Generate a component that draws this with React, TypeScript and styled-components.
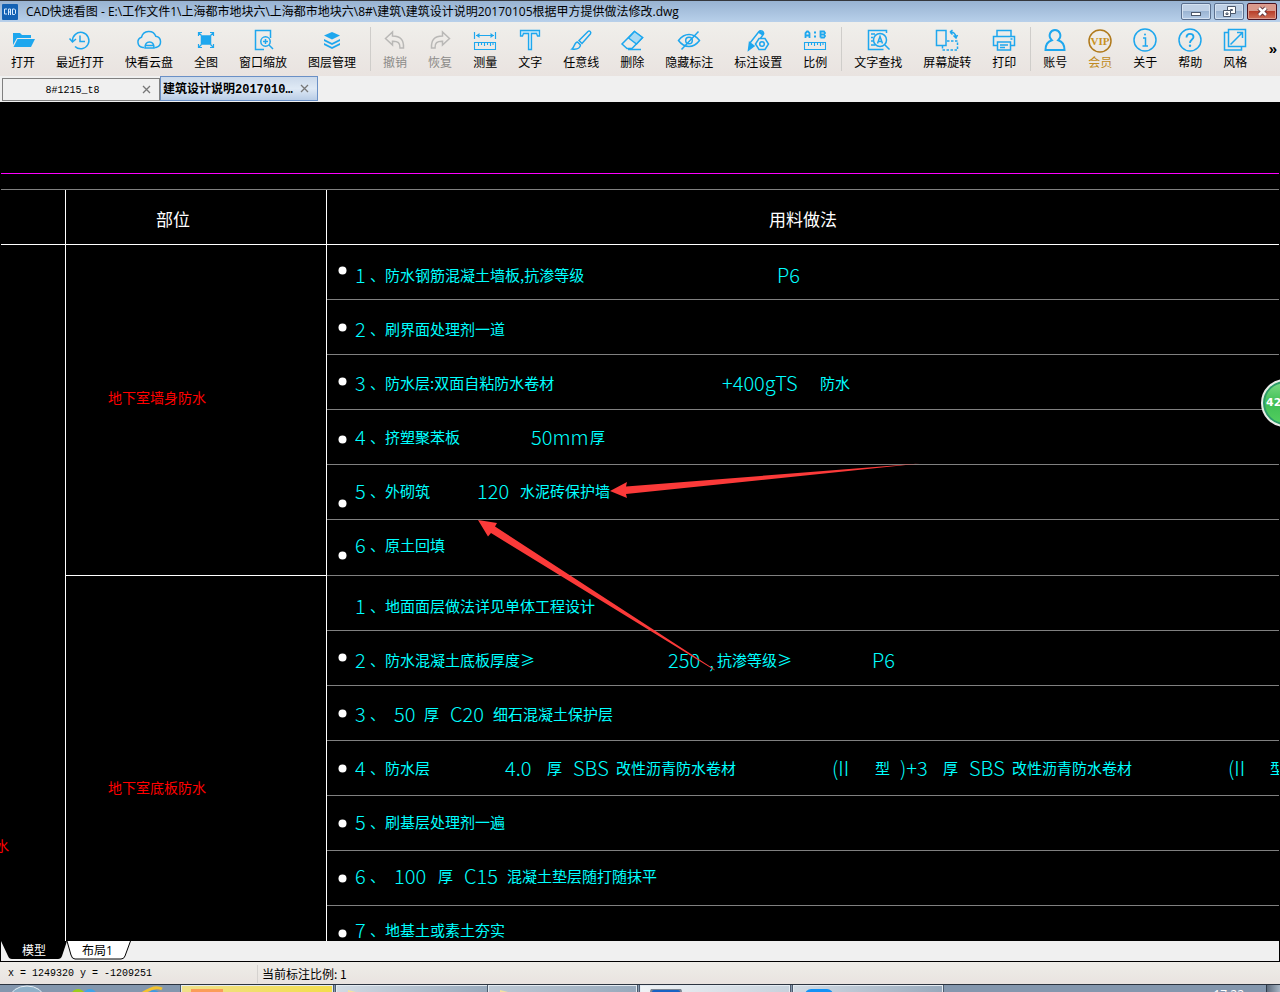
import React from "react";
import styled, { createGlobalStyle } from "styled-components";

const han = '"Noto Sans CJK SC", sans-serif';
const uiFont = `"Open Sans", ${han}`;
const monoFont = '"Liberation Mono", "Noto Sans CJK SC", monospace';

const GlobalStyle = createGlobalStyle`
  *, *::before, *::after { box-sizing: border-box; }
  body { margin: 0; background: #000; }
  button { font: inherit; color: inherit; padding: 0; border: 0; background: none; }
`;

const Shell = styled.div`
  display: flex;
  flex-direction: column;
  height: 100vh;
  overflow: hidden;
  font-family: ${han};
  font-size: 12px;
  color: #000;
`;

/* ---------- title bar ---------- */

const TitleBar = styled.header`
  flex: none;
  display: flex;
  align-items: center;
  gap: 8px;
  height: 22px;
  padding: 0 3px 0 2px;
  border-top: 1px solid #35373c;
  background: linear-gradient(#98b3d2, #b8d0ea);
`;

const Title = styled.h1`
  flex: 1;
  margin: 0;
  font: 400 12px/20px ${uiFont};
  white-space: nowrap;
  overflow: hidden;
`;

const WindowButtons = styled.div`
  display: flex;
  gap: 3px;
`;

const WindowButton = styled.button<{ $close?: boolean }>`
  display: grid;
  place-items: center;
  width: 30px;
  height: 17px;
  border: 1px solid ${(p) => (p.$close ? "#4a1420" : "#5a6f8e")};
  border-radius: 2px;
  box-shadow: inset 0 0 0 1px ${(p) => (p.$close ? "#dd9d90" : "#d5e2f1")};
  background: ${(p) =>
    p.$close
      ? "linear-gradient(#d99a8c 0 45%, #b8402b 50%, #cf7158)"
      : "linear-gradient(#bfd0e5 0 45%, #9bb4d2 50%, #b4cbe6)"};
`;

/* ---------- toolbar ---------- */

const Toolbar = styled.nav`
  flex: none;
  display: flex;
  align-items: flex-start;
  height: 54px;
  padding: 5px 3px 0 11px;
  background: linear-gradient(#f0efeb, #e9e3e0);
`;

const ToolGroup = styled.div`
  display: flex;
  gap: 21px;
`;

const Separator = styled.span`
  flex: none;
  width: 1px;
  height: 44px;
  margin: 0 12px 0 14px;
  background: #cfcdca;
`;

const ToolButton = styled.button<{ $tone?: string }>`
  display: flex;
  flex-direction: column;
  align-items: center;
  color: ${(p) => p.$tone ?? "#000"};
  font-size: 12px;
  line-height: 18px;
  white-space: nowrap;
`;

const ToolIcon = styled.svg`
  display: block;
  width: 26px;
  height: 26px;
  margin: 0 -1px;
  fill: none;
  stroke: #1ea7ee;
  stroke-width: 1.5;
`;

const More = styled.button`
  margin: 12px 0 0 auto;
  font: 700 15px/20px "Liberation Sans", sans-serif;
`;

/* ---------- document tabs ---------- */

const TabBar = styled.div`
  flex: none;
  display: flex;
  align-items: flex-end;
  height: 26px;
  padding: 0 2px 1px;
  background: #f0f0f0;
`;

const FileTab = styled.div<{ $active?: boolean }>`
  display: flex;
  align-items: center;
  width: 158px;
  height: ${(p) => (p.$active ? 25 : 23)}px;
  padding: 0 8px 0 ${(p) => (p.$active ? 2 : 0)}px;
  border: 1px solid ${(p) => (p.$active ? "#6a90c6" : "#808080")};
  background: ${(p) => (p.$active ? "linear-gradient(#cbd9ea, #dfe9f5 50%, #b9cde6)" : "#f0f0f0")};
`;

const TabName = styled.button<{ $active?: boolean }>`
  flex: 1;
  padding-top: 2px;
  text-align: ${(p) => (p.$active ? "left" : "center")};
  font: ${(p) => (p.$active ? "700 12px/20px" : "400 10px/20px")} ${monoFont};
  white-space: nowrap;
`;

const CloseTab = styled.button`
  display: grid;
  place-items: center;
  width: 9px;
  height: 9px;
`;

/* ---------- drawing ---------- */

const Canvas = styled.main`
  position: relative;
  flex: 1;
  min-height: 0;
  overflow: hidden;
  padding: 71px 1px 0;
  background: #000;
`;

const Frame = styled.div`
  border-top: 1px solid #f0f;
  padding-top: 15px;
`;

const Schedule = styled.table`
  width: 100%;
  table-layout: fixed;
  border-collapse: separate;
  border-spacing: 0;
  border-top: 1px solid #808080;
`;

const HeadCell = styled.th<{ $width?: number; $indent?: number }>`
  width: ${(p) => (p.$width ? `${p.$width}px` : "auto")};
  height: 55px;
  padding: 4px 0 0 ${(p) => p.$indent ?? 0}px;
  border-bottom: 1px solid #fff;
  border-right: ${(p) => (p.$width ? "1px solid #fff" : "0")};
  color: #fff;
  font: 400 17px/24px ${han};
  text-align: ${(p) => (p.$indent ? "left" : "center")};
`;

const PartCell = styled.th<{ $last?: boolean }>`
  padding: 0 0 26px 42px;
  height: ${(p) => (p.$last ? 448 : 331)}px;
  border-right: 1px solid #fff;
  border-bottom: 1px solid #fff;
  color: #f00;
  font: 400 14px/24px ${han};
  text-align: left;
`;

const EdgeCell = styled.td`
  padding: 588px 0 0;
  border-right: 1px solid #fff;
  vertical-align: top;
  color: #f00;
  font: 400 14px/24px ${han};
  text-indent: -6px;
`;

const MethodCell = styled.td<{ $rules: number }>`
  padding: 3px 0 0 28px;
  border-bottom: 1px solid #808080;
  vertical-align: top;
  background: repeating-linear-gradient(#000 0 54px, #808080 54px 55px) no-repeat;
  background-size: 100% ${(p) => p.$rules * 55}px;
`;

const Steps = styled.ol`
  margin: 0;
  padding: 0;
  list-style: none;
`;

const Step = styled.li`
  display: flex;
  align-items: center;
  height: 54px;
  overflow: hidden;
  color: #0ff;
  white-space: nowrap;
`;

const Slot = styled.span<{ $w: number; $latin: boolean }>`
  flex: none;
  width: ${(p) => p.$w}px;
  font: ${(p) => (p.$latin ? "300 20px/32px" : "400 15px/32px")} ${han};
`;

const Markup = styled.svg`
  position: absolute;
  top: 0;
  left: 0;
  width: 1280px;
  height: 840px;
  pointer-events: none;
`;

const Badge = styled.div`
  position: absolute;
  top: 277px;
  right: -29px;
  width: 48px;
  height: 48px;
  padding-left: 3px;
  border: 2px solid #e8ece8;
  border-radius: 50%;
  box-shadow: inset 0 0 0 2px #2c9a6a;
  background: linear-gradient(#7fdc86, #3fbf55 50%, #55d060);
  color: #fff;
  font: 700 11px/44px "DejaVu Sans", sans-serif;
`;

/* ---------- bottom bars ---------- */

const SheetBar = styled.div`
  flex: none;
  display: flex;
  height: 21px;
  border: solid #000;
  border-width: 0 1px 1px;
  background: #f0f0f0;
`;

const SheetTab = styled.button<{ $active?: boolean }>`
  position: relative;
  width: ${(p) => (p.$active ? 66 : 61)}px;
  height: 19px;
  color: ${(p) => (p.$active ? "#fff" : "#000")};
  font: 400 12px/19px ${uiFont};

  svg {
    position: absolute;
    top: 0;
    left: 0;
  }
  span {
    position: relative;
  }
`;

const StatusBar = styled.footer`
  flex: none;
  display: flex;
  align-items: center;
  height: 22px;
  padding: 1px 8px 0;
  background: linear-gradient(#eeede8, #e9e3e0);
  font: 400 10px/20px ${monoFont};
`;

const Coordinates = styled.span`
  width: 250px;
  height: 18px;
  line-height: 18px;
  border-right: 1px solid #d5d2cf;
`;

const Scale = styled.span`
  padding-left: 4px;
  font: 400 12px/20px ${han};
`;

const Taskbar = styled.div`
  flex: none;
  display: flex;
  align-items: flex-start;
  height: 8px;
  overflow: hidden;
  border-top: 1px solid #2c3440;
  background: #8497ae;
`;

const Launchers = styled.div`
  flex: none;
  display: flex;
  width: 181px;
`;

const TaskButton = styled.button<{ $tone: string; $w: number; $gap?: number }>`
  flex: none;
  display: flex;
  width: ${(p) => p.$w}px;
  height: 24px;
  margin-right: ${(p) => p.$gap ?? 3}px;
  padding: 3px 9px;
  border: 1px solid #e4ebf2;
  box-shadow: 0 0 0 1px #4d5b6d;
  background: ${(p) => p.$tone};
`;

const Clock = styled.time`
  margin-left: auto;
  padding: 2px 22px 0 0;
  color: #fff;
  font: 400 12px/16px ${uiFont};
`;

const ShowDesktop = styled.button`
  width: 14px;
  height: 24px;
  border-left: 1px solid #2f3b4a;
  background: linear-gradient(90deg, #5d6b7d, #a9b6c5);
`;

/* ---------- icons ---------- */

const ruler = <path d="M2.5 15.5h21v7h-21z M6.5 16v3 M9.5 16v2 M12.5 16v3 M15.5 16v2 M18.5 16v3 M21 16v2" strokeWidth="1.1" />;

const icons: Record<string, React.ReactNode> = {
  open: (
    <g fill="#1ea7ee" stroke="none">
      <path d="M3 6h7l2 2h9v3H7L3 18z" />
      <path d="M7.500 12H25l-4 8H3.500z" />
    </g>
  ),
  recent: (
    <g>
      <path d="M5.500 14A8.200 8.200 0 1 1 8 19.500" />
      <path d="M2.500 11.500l3 3.500 3.500-3" />
      <path d="M13 8.500v6h5" />
    </g>
  ),
  cloud: (
    <g>
      <path d="M8 20.500H7A5.300 5.300 0 0 1 5.500 10.200 7.500 7.500 0 0 1 19.800 9.300 5.700 5.700 0 0 1 20 20.500h-1.500" />
      <path d="M9 21c0-3.500 1-6 4.500-6s4.500 2.500 4.500 6z M9.500 18.500h8" />
    </g>
  ),
  full: (
    <g>
      <rect x="8.500" y="9" width="9" height="8" fill="#1ea7ee" />
      <path d="M5.500 9V5.500H9 M17 5.500h3.500V9 M20.500 17v3.500H17 M9 20.500H5.500V17 M5.500 5.500l3 3 M20.500 5.500l-3 3 M20.500 20.500l-3-3 M5.500 20.500l3-3" strokeWidth="1.200" />
    </g>
  ),
  zoomWindow: (
    <g>
      <path d="M20.500 11V3.500h-15v19H14" />
      <circle cx="15.500" cy="14.500" r="4.700" />
      <path d="M19 18l4 4 M13 14.500h5 M15.500 12v5" />
    </g>
  ),
  layers: (
    <g fill="#1ea7ee" stroke="none">
      <path d="M13 5l8 3.500-8 4-8-4z" />
      <path d="M5 12l8 4 8-4v2l-8 4-8-4z" />
      <path d="M5 16l8 4 8-4v2l-8 4-8-4z" />
    </g>
  ),
  undo: <path stroke="#b9b8b6" d="M3.500 11.500L10.500 5v4c8 0 11.500 4 11 12h-3.500c.2-5-2-7-7.500-6.800V18z" />,
  redo: <path stroke="#b9b8b6" d="M22.500 11.500L15.500 5v4c-8 0-11.500 4-11 12H8c-.2-5 2-7 7.500-6.800V18z" />,
  measure: (
    <g>
      <path d="M2.500 5v7 M23.500 5v7 M4 8.500h18" strokeWidth="1.2" />
      <path d="M7.500 6L4 8.500 7.500 11z M18.500 6l3.500 2.500-3.500 2.500z" fill="#1ea7ee" stroke="none" />
      {ruler}
    </g>
  ),
  text: <path d="M3.500 3.500h19V9h-2l-1-2.500h-5v16h-3v-16h-5L5.500 9h-2z" fill="#c9e8f8" strokeWidth="1.300" />,
  brush: (
    <g>
      <path d="M11 13.500L20 4.500c1.500-1.200 3.500.5 2.500 2.200L14 16.500z" />
      <path d="M9.500 15c-3 0-3 5-5.500 7 4 .5 8-.5 8.500-4z" />
    </g>
  ),
  eraser: (
    <g>
      <path d="M15.500 4.500l8 6-10.500 11H8L3 17z" />
      <path d="M15.500 4.500l8 6-6 6.500-8-6z" fill="#a9d9f3" />
      <path d="M9 22.500h13" />
    </g>
  ),
  hide: (
    <g>
      <path d="M2.500 13.500c6-8 15-8 21 0-6 8-15 8-21 0z" />
      <circle cx="13" cy="13.500" r="3.300" />
      <path d="M22.500 4.500l-17 18" />
    </g>
  ),
  annotate: (
    <g>
      <path d="M5 16L14 4.500c2-2 5.500.2 4.300 3L15 12" />
      <path d="M14 4.500l4.500 3" strokeWidth="3" />
      <path d="M4.500 15.500l4.500 3.500-5.500 4z" fill="#1ea7ee" />
      <path d="M14 11.500h6l3.500 5.500-3.500 5.500h-6L10.500 17z" fill="#efecea" />
      <circle cx="17" cy="17" r="2.300" />
    </g>
  ),
  ratio: (
    <g>
      <path d="M3.500 11V6l1.500-1.500h1L7.500 6v5 M3.500 8.500h4 M18.500 10.500v-6h3.500l1 1.500-1 1.500h-3.500 M22 7.500l1 1.500-1 1.500h-3.500" strokeWidth="1.800" />
      <path d="M12 5.500h2 M12 9.500h2" strokeWidth="2" />
      {ruler}
    </g>
  ),
  find: (
    <g>
      <path d="M21.500 6V3.500h-18v19h15" />
      <path d="M6 7h4 M6 10.500h2 M6 14h2 M6 18h4" />
      <circle cx="15" cy="13" r="6.500" />
      <path d="M20 18l4.500 4.500 M12.500 16.500L15 9.500l2.500 7 M13.500 14.500h3.200" />
    </g>
  ),
  rotate: (
    <g>
      <path d="M2.500 3.500h9.500v15H2.500z" />
      <path d="M8.500 19v4h15v-9H13" strokeDasharray="2.500 1.500" />
      <path d="M16.500 5c3 0 5 2 5.500 5 M16 5l2.500-2 M16 5l2.500 2.500 M19.500 8.500l2.500 2.500 1.500-3" />
    </g>
  ),
  print: (
    <g>
      <path d="M6 9V3.500h14V9 M6 18.500H2.500v-9h21v9H20" />
      <path d="M6.500 15h13v8h-13z M9 18h8 M9 20.500h5 M19.500 12h2" />
    </g>
  ),
  account: (
    <path
      strokeWidth="2"
      d="M9.800 13.200c-4.500-4.500-1.200-10.200 3.200-10.200s7.700 5.700 3.200 10.200c3.500 1 6.300 4.500 6.300 9.800h-19c0-5.300 2.800-8.800 6.300-9.800z"
    />
  ),
  vip: (
    <g stroke="#b07a1c">
      <circle cx="13" cy="14" r="11" />
      <text x="13" y="18" textAnchor="middle" fontFamily="Liberation Serif, serif" fontSize="11" fontWeight="700" fill="#c9921e" stroke="none">
        VIP
      </text>
    </g>
  ),
  about: (
    <g>
      <circle cx="13" cy="13" r="11" />
      <path d="M11 11h2.500v8 M10.500 19h5.500" />
      <circle cx="13" cy="7.500" r="1" fill="#1ea7ee" stroke="none" />
    </g>
  ),
  help: (
    <g>
      <circle cx="13" cy="13" r="11" />
      <path d="M9.500 10.500c0-5 7-4.500 7-.5 0 2.500-3.500 2.500-3.500 6" strokeWidth="1.800" />
      <circle cx="13" cy="18.700" r="1.200" fill="#1ea7ee" stroke="none" />
    </g>
  ),
  style: (
    <g>
      <path d="M16 2.500H6.500v17h17V12 M6.500 5.500h-4v17.500h17v-3.500 M15 2.500h8.500v10" />
      <path d="M8.500 17.500l12-12 M15 5.500h5.500V11" />
    </g>
  ),
};

type Tool = { icon: string; label: string; tone?: string };

const toolGroups: Tool[][] = [
  [
    { icon: "open", label: "打开" },
    { icon: "recent", label: "最近打开" },
    { icon: "cloud", label: "快看云盘" },
    { icon: "full", label: "全图" },
    { icon: "zoomWindow", label: "窗口缩放" },
    { icon: "layers", label: "图层管理" },
  ],
  [
    { icon: "undo", label: "撤销", tone: "#8c8b89" },
    { icon: "redo", label: "恢复", tone: "#8c8b89" },
    { icon: "measure", label: "测量" },
    { icon: "text", label: "文字" },
    { icon: "brush", label: "任意线" },
    { icon: "eraser", label: "删除" },
    { icon: "hide", label: "隐藏标注" },
    { icon: "annotate", label: "标注设置" },
    { icon: "ratio", label: "比例" },
  ],
  [
    { icon: "find", label: "文字查找" },
    { icon: "rotate", label: "屏幕旋转" },
    { icon: "print", label: "打印" },
  ],
  [
    { icon: "account", label: "账号" },
    { icon: "vip", label: "会员", tone: "#c08a20" },
    { icon: "about", label: "关于" },
    { icon: "help", label: "帮助" },
    { icon: "style", label: "风格" },
  ],
];

/* Each step is a run of text pieces with the width of the slot that holds it. */
type Piece = [text: string, width: number];

const wallSteps: Piece[][] = [
  [["防水钢筋混凝土墙板,抗渗等级", 392], ["P6", 30]],
  [["刷界面处理剂一道", 120]],
  [["防水层:双面自粘防水卷材", 337], ["+400gTS", 98], ["防水", 30]],
  [["挤塑聚苯板", 146], ["50mm", 59], ["厚", 15]],
  [["外砌筑", 92], ["120", 43], ["水泥砖保护墙", 90]],
  [["原土回填", 60]],
];

const floorSteps: Piece[][] = [
  [["地面面层做法详见单体工程设计", 210]],
  [["防水混凝土底板厚度≥", 283], ["250", 41], [",", 8], ["抗渗等级≥", 155], ["P6", 30]],
  [["", 9], ["50", 30], ["厚", 26], ["C20", 43], ["细石混凝土保护层", 120]],
  [
    ["防水层", 120], ["4.0", 42], ["厚", 26], ["SBS", 43], ["改性沥青防水卷材", 216], ["(II", 43], ["型", 25],
    [")+3", 43], ["厚", 26], ["SBS", 43], ["改性沥青防水卷材", 216], ["(II", 42], ["型", 15],
  ],
  [["刷基层处理剂一遍", 120]],
  [["", 9], ["100", 44], ["厚", 26], ["C15", 43], ["混凝土垫层随打随抹平", 150]],
  [["地基土或素土夯实", 120]],
];

const bullets = [168, 225, 279, 337, 401, 453, 555, 611, 666, 721, 776, 831];

const isLatin = (text: string) => /^[\x20-\x7e]+$/.test(text);

function StepList({ steps }: { steps: Piece[][] }) {
  return (
    <Steps>
      {steps.map((pieces, i) => (
        <Step key={i}>
          <Slot $w={15} $latin>{i + 1}</Slot>
          <Slot $w={15} $latin={false}>、</Slot>
          {pieces.map(([text, width], j) => (
            <Slot key={j} $w={width} $latin={isLatin(text)}>{text}</Slot>
          ))}
        </Step>
      ))}
    </Steps>
  );
}

const Cross = () => (
  <svg width="9" height="9" viewBox="0 0 9 9" stroke="#777" strokeWidth="1.300" aria-hidden="true">
    <path d="M1 1l7 7M8 1L1 8" />
  </svg>
);

export default function App() {
  return (
    <Shell>
      <GlobalStyle />
      <TitleBar>
        <svg width="16" height="16" viewBox="0 0 16 16" aria-hidden="true">
          <rect width="16" height="16" rx="1" fill="#1462b4" />
          <path d="M5 5H2.500v5H5 M6.500 11V5h2v6 M6.500 8h2 M10.500 5v5.500h2l1-1V6l-1-1z" fill="none" stroke="#d9ecff" />
        </svg>
        <Title>CAD快速看图 - E:\工作文件1\上海都市地块六\上海都市地块六\8#\建筑\建筑设计说明20170105根据甲方提供做法修改.dwg</Title>
        <WindowButtons>
          <WindowButton aria-label="最小化">
            <svg width="12" height="10"><rect x="1.500" y="5.500" width="9" height="3" fill="#fff" stroke="#4c586b" /></svg>
          </WindowButton>
          <WindowButton aria-label="还原">
            <svg width="13" height="12" fill="#fff" stroke="#4c586b">
              <path d="M4.500.5h8v7h-8z M7.500 3.500h2v1h-2z" />
              <path d="M.5 4.500h7v6h-7z M3 7h2v1.500H3z" />
            </svg>
          </WindowButton>
          <WindowButton $close aria-label="关闭">
            <svg width="13" height="11" fill="none">
              <path d="M3 2l7 7M10 2L3 9" stroke="#5c3038" strokeWidth="4.500" />
              <path d="M3 2l7 7M10 2L3 9" stroke="#fff" strokeWidth="2.500" />
            </svg>
          </WindowButton>
        </WindowButtons>
      </TitleBar>

      <Toolbar>
        {toolGroups.map((group, i) => (
          <React.Fragment key={i}>
            {i > 0 && <Separator />}
            <ToolGroup>
              {group.map((tool) => (
                <ToolButton key={tool.label} $tone={tool.tone}>
                  <ToolIcon viewBox="0 0 26 26" aria-hidden="true">{icons[tool.icon]}</ToolIcon>
                  {tool.label}
                </ToolButton>
              ))}
            </ToolGroup>
          </React.Fragment>
        ))}
        <More>»</More>
      </Toolbar>

      <TabBar>
        <FileTab>
          <TabName>8#1215_t8</TabName>
          <CloseTab aria-label="关闭 8#1215_t8"><Cross /></CloseTab>
        </FileTab>
        <FileTab $active>
          <TabName $active>建筑设计说明2017010…</TabName>
          <CloseTab aria-label="关闭 建筑设计说明"><Cross /></CloseTab>
        </FileTab>
      </TabBar>

      <Canvas>
        <Frame>
          <Schedule>
            <thead>
              <tr>
                <HeadCell $width={65} />
                <HeadCell $width={261} $indent={90}>部位</HeadCell>
                <HeadCell>用料做法</HeadCell>
              </tr>
            </thead>
            <tbody>
              <tr>
                <EdgeCell rowSpan={2}>水</EdgeCell>
                <PartCell scope="row">地下室墙身防水</PartCell>
                <MethodCell $rules={5}><StepList steps={wallSteps} /></MethodCell>
              </tr>
              <tr>
                <PartCell scope="row" $last>地下室底板防水</PartCell>
                <MethodCell $rules={8}><StepList steps={floorSteps} /></MethodCell>
              </tr>
            </tbody>
          </Schedule>
        </Frame>
        <Markup aria-hidden="true">
          <g fill="#fff">
            {bullets.map((y) => <circle key={y} cx="342.500" cy={y + 0.5} r="4" />)}
          </g>
          <g fill="#fb3a39">
            <path d="M610 389l17-9-1 4.500L920 361.500 626 392l1 4z" />
            <path d="M478 418l19 3-2 3.500L714 567l1 1.500L491 431l-3 3.500z" />
          </g>
        </Markup>
        <Badge>42</Badge>
      </Canvas>

      <SheetBar>
        <SheetTab $active>
          <svg width="66" height="19" aria-hidden="true"><path d="M0 0h66l-5 15q-1 3-4 3H11q-3 0-4-3z" fill="#000" /></svg>
          <span>模型</span>
        </SheetTab>
        <SheetTab>
          <svg width="66" height="19" aria-hidden="true">
            <path d="M0 0l4 14q1 4 4 4h46q3 0 4-3L63.500 0" fill="#fff" stroke="#000" />
          </svg>
          <span>布局1</span>
        </SheetTab>
      </SheetBar>

      <StatusBar>
        <Coordinates>x = 1249320 y = -1209251</Coordinates>
        <Scale>当前标注比例: 1</Scale>
      </StatusBar>

      <Taskbar>
        <Launchers>
          <svg width="181" height="7" aria-hidden="true">
            <ellipse cx="27" cy="13" rx="17" ry="12" fill="#8fb0c8" stroke="#e6eef4" />
            <circle cx="78" cy="11" r="7" fill="#9ccc1a" />
            <circle cx="90" cy="11" r="7" fill="#3fa4e8" />
            <path d="M143 8q12-8 19-4" fill="none" stroke="#f2c230" strokeWidth="3" />
            <circle cx="154" cy="11" r="6" fill="#3f9be0" />
          </svg>
        </Launchers>
        <TaskButton $w={152} $tone="linear-gradient(90deg, #efe08a, #f3dd4c)" aria-label="任务 1">
          <svg width="32" height="7"><rect width="32" height="7" fill="#fb9d58" /></svg>
        </TaskButton>
        <TaskButton $w={152} $gap={0} $tone="linear-gradient(110deg, #d3dbe4, #95a7ba)" aria-label="任务 2">
          <svg width="24" height="7"><path d="M2 7V1l8 2 12 1v3z" fill="#f3e3a0" /></svg>
        </TaskButton>
        <TaskButton $w={149} $tone="linear-gradient(110deg, #bfcad6, #95a7ba)" aria-label="任务 3">
          <svg width="24" height="7"><path d="M2 7V1l8 2 12 1v3z" fill="#f3e3a0" /></svg>
        </TaskButton>
        <TaskButton $w={150} $tone="linear-gradient(110deg, #f0f3f6, #c5d0db)" aria-label="任务 4">
          <svg width="32" height="7"><rect x="1" width="30" height="9" rx="3" fill="#1763c4" stroke="#7c8693" strokeWidth="2" /></svg>
        </TaskButton>
        <TaskButton $w={150} $tone="linear-gradient(110deg, #d3dbe4, #95a7ba)" aria-label="任务 5">
          <svg width="32" height="7"><rect x="2" width="28" height="14" rx="6" fill="#1492f5" /></svg>
        </TaskButton>
        <Clock>17:22</Clock>
        <ShowDesktop aria-label="显示桌面" />
      </Taskbar>
    </Shell>
  );
}
